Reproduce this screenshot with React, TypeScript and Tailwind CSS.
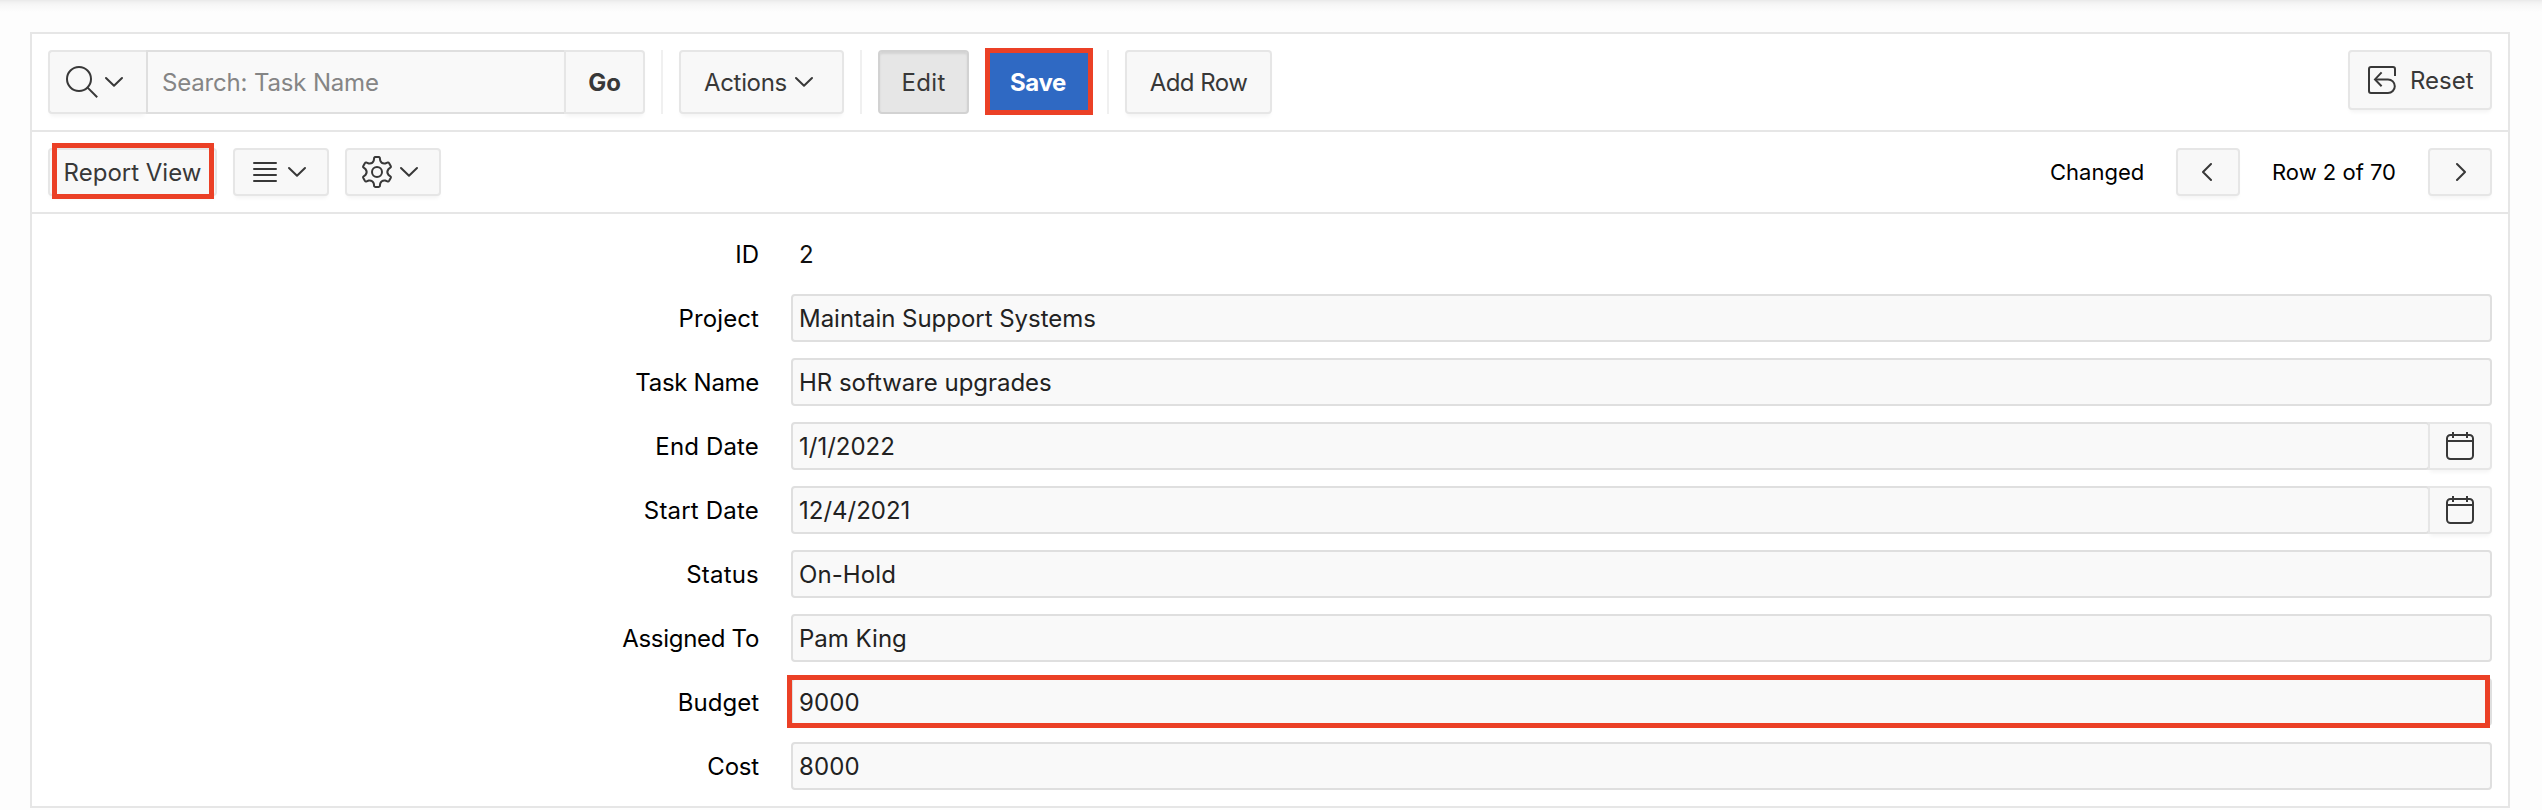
import type { ReactNode } from "react";

const buttonBase =
  "flex shrink-0 items-center border-2 border-[#e6e6e6] bg-[#f8f8f8] text-[#383838] shadow-[0_4px_4px_-2px_rgba(0,0,0,0.05)]";

function ChevronDown() {
  return (
    <svg className="h-3 w-5 shrink-0" viewBox="0 0 20 12" fill="none" stroke="currentColor" strokeWidth="2" strokeLinecap="round" strokeLinejoin="round">
      <path d="M2 2 L10 9.8 L18 2" />
    </svg>
  );
}

function SearchIcon() {
  return (
    <svg className="size-8 shrink-0" viewBox="0 0 32 32" fill="none" stroke="currentColor" strokeWidth="2">
      <circle cx="13" cy="13" r="12" />
      <path d="M21.6 21.6 L31.2 31.2" />
    </svg>
  );
}

function ListIcon() {
  return (
    <svg className="h-5 w-6 shrink-0" viewBox="0 0 24 20" fill="none" stroke="currentColor" strokeWidth="2" strokeLinecap="round">
      <path d="M1 1H23M1 7H23M1 13H23M1 19H23" />
    </svg>
  );
}

const polar = (deg: number, r: number) => {
  const a = ((deg - 90) * Math.PI) / 180;
  return `${(16 + r * Math.cos(a)).toFixed(2)} ${(16 + r * Math.sin(a)).toFixed(2)}`;
};

const gearPath =
  [0, 60, 120, 180, 240, 300]
    .map(
      (t, i) =>
        `${i === 0 ? "M" : "L"}${polar(t - 11, 14.6)} Q${polar(t - 9.5, 15.1)} ${polar(t - 6, 15)} L${polar(t + 6, 15)} Q${polar(t + 9.5, 15.1)} ${polar(t + 11, 14.6)} L${polar(t + 16, 11.8)} Q${polar(t + 30, 9.2)} ${polar(t + 44, 11.8)}`,
    )
    .join(" ") + " Z";

function GearIcon() {
  return (
    <svg className="size-8 shrink-0" viewBox="0 0 32 32" fill="none" stroke="currentColor" strokeWidth="2" strokeLinejoin="round">
      <path d={gearPath} />
      <circle cx="16" cy="16" r="5" />
    </svg>
  );
}

function ResetIcon() {
  return (
    <svg className="size-8 shrink-0" viewBox="0 0 32 32" fill="none" stroke="currentColor" strokeWidth="2">
      <path d="M29 12V5a2 2 0 0 0-2-2H5a2 2 0 0 0-2 2v22a2 2 0 0 0 2 2h17a6.8 6.8 0 0 0 0-13.6H9" />
      <path d="M15.6 8.4L9 15.4l6.6 6.8" />
    </svg>
  );
}

function CalendarIcon() {
  return (
    <svg className="size-8 shrink-0" viewBox="0 0 32 32" fill="none" stroke="currentColor" strokeWidth="2">
      <rect x="3" y="5" width="26" height="24" rx="3.5" />
      <path d="M3 11H29M9 2V8M23 2V8" />
    </svg>
  );
}

function Caret({ d }: { d: string }) {
  return (
    <svg className="h-5 w-3 shrink-0" viewBox="0 0 12 20" fill="none" stroke="currentColor" strokeWidth="2" strokeLinecap="round" strokeLinejoin="round">
      <path d={d} />
    </svg>
  );
}

function Separator() {
  return <div className="h-16 w-0.5 shrink-0 bg-[#f0f0f0]" />;
}

function Highlight({ className }: { className: string }) {
  return <div className={`pointer-events-none absolute border-[5px] border-[#eb4026] ${className}`} />;
}

function Row({ label, labelClass = "", children }: { label: string; labelClass?: string; children: ReactNode }) {
  return (
    <div className="flex h-12 items-center">
      <div className={`w-[725px] shrink-0 pt-0.5 text-right text-black ${labelClass}`}>{label}</div>
      <div className="ml-8 flex h-12 min-w-0 flex-1">{children}</div>
    </div>
  );
}

function Field({ value, className = "", calendar = false, highlight = false }: { value: string; className?: string; calendar?: boolean; highlight?: boolean }) {
  return (
    <div className="relative flex h-12 flex-1">
      <div className={`flex flex-1 items-center rounded-[4px] border-2 border-[#dfdfdf] bg-[#f9f9f9] pl-1.5 pt-0.5 text-[#222] ${className}`}>{value}</div>
      {calendar && (
        <button className={`${buttonBase} -ml-0.5 w-16 justify-center rounded-r-[4px]`}>
          <CalendarIcon />
        </button>
      )}
      {highlight && <Highlight className="-left-1 -top-[3px] h-[53px] w-[1703px]" />}
    </div>
  );
}

export default function App() {
  return (
    <div className="relative h-[810px] w-[2542px] overflow-hidden bg-[#fdfdfd] pl-[30px] pt-8 font-['Inter',sans-serif] text-2xl leading-8">
      <div className="absolute inset-x-0 top-0 h-3 bg-[linear-gradient(to_bottom,#e9e9e9_0,#f1f1f1_2px,#f7f7f7_5px,#fdfdfd_12px)]" />
      <div className="flex h-[776px] w-[2480px] flex-col border-2 border-[#e6e6e6] bg-white">
        <div className="flex h-[98px] shrink-0 items-start justify-between border-b-2 border-[#e6e6e6] px-4 pt-4">
          <div className="flex gap-4">
            <div className="flex">
              <button className={`${buttonBase} h-16 w-[98px] gap-1.5 rounded-l-[4px] border-r-0 pl-4`}>
                <SearchIcon />
                <ChevronDown />
              </button>
              <div className="flex h-16 w-[418px] items-center border-y-2 border-l-2 border-[#dfdfdf] bg-[#f9f9f9] pl-3.5 pt-0.5 tracking-[-0.17px] text-[#858585]">
                Search: Task Name
              </div>
              <button className={`${buttonBase} h-16 w-[81px] justify-center rounded-r-[4px] pt-0.5 font-bold`}>Go</button>
            </div>
            <Separator />
            <button className={`${buttonBase} h-16 w-[165px] justify-between rounded-[4px] pl-[23px] pr-7 tracking-[-0.33px]`}>
              <span className="pt-0.5">Actions</span>
              <ChevronDown />
            </button>
            <Separator />
            <button className="flex h-16 w-[91px] items-center justify-center rounded-[4px] border-2 border-[#d2d2d2] bg-[#e6e6e6] pt-0.5 tracking-[0.36px] text-[#383838] shadow-[inset_0_2px_2px_rgba(0,0,0,0.08)]">
              Edit
            </button>
            <div className="relative">
              <button className="flex h-16 w-[106px] items-center justify-center rounded-[4px] bg-[#2f69c3] pt-0.5 font-bold tracking-[-0.4px] text-white">Save</button>
              <Highlight className="-top-0.5 left-0 h-[67px] w-[108px]" />
            </div>
            <Separator />
            <button className={`${buttonBase} h-16 w-[147px] justify-center rounded-[4px] pt-0.5 tracking-[-0.54px]`}>Add Row</button>
          </div>
          <button className={`${buttonBase} h-[60px] w-36 gap-3 rounded-[4px] pl-4`}>
            <ResetIcon />
            <span className="pt-0.5">Reset</span>
          </button>
        </div>

        <div className="flex h-[82px] shrink-0 items-start justify-between border-b-2 border-[#e6e6e6] px-4 pt-4">
          <div className="flex gap-4">
            <div className="relative">
              <button className={`${buttonBase} h-12 w-[169px] justify-center rounded-[4px] pt-0.5`}>Report View</button>
              <Highlight className="-top-[5px] left-1 h-14 w-[162px]" />
            </div>
            <button className={`${buttonBase} h-12 w-24 gap-2.5 rounded-[4px] pl-[18px]`}>
              <ListIcon />
              <ChevronDown />
            </button>
            <button className={`${buttonBase} h-12 w-24 gap-1.5 rounded-[4px] pl-3.5`}>
              <GearIcon />
              <ChevronDown />
            </button>
          </div>
          <div className="flex h-12 items-center gap-8 text-[22px] text-black">
            <span className="w-[94px] text-right">Changed</span>
            <button className={`${buttonBase} h-12 w-16 justify-center rounded-[4px]`}>
              <Caret d="M9 2L1 10l8 8" />
            </button>
            <span className="flex w-[124px] justify-center whitespace-nowrap">Row 2 of 70</span>
            <button className={`${buttonBase} h-12 w-16 justify-center rounded-[4px]`}>
              <Caret d="M3 2L11 10l-8 8" />
            </button>
          </div>
        </div>

        <div className="flex flex-col gap-4 pl-0.5 pr-4 pt-4">
          <Row label="ID">
            <div className="flex items-center pl-2 pt-0.5 text-[#111]">2</div>
          </Row>
          <Row label="Project" labelClass="tracking-[0.1px]">
            <Field value="Maintain Support Systems" className="tracking-[-0.03px]" />
          </Row>
          <Row label="Task Name" labelClass="tracking-[-0.3px]">
            <Field value="HR software upgrades" className="tracking-[-0.03px]" />
          </Row>
          <Row label="End Date" labelClass="tracking-[0.15px]">
            <Field value="1/1/2022" calendar />
          </Row>
          <Row label="Start Date" labelClass="tracking-[0.19px]">
            <Field value="12/4/2021" calendar />
          </Row>
          <Row label="Status" labelClass="tracking-[0.22px]">
            <Field value="On-Hold" className="tracking-[0.1px]" />
          </Row>
          <Row label="Assigned To" labelClass="tracking-[-0.3px]">
            <Field value="Pam King" />
          </Row>
          <Row label="Budget">
            <Field value="9000" className="tracking-[0.1px]" highlight />
          </Row>
          <Row label="Cost" labelClass="tracking-[-0.2px]">
            <Field value="8000" className="tracking-[0.1px]" />
          </Row>
        </div>
      </div>
    </div>
  );
}
